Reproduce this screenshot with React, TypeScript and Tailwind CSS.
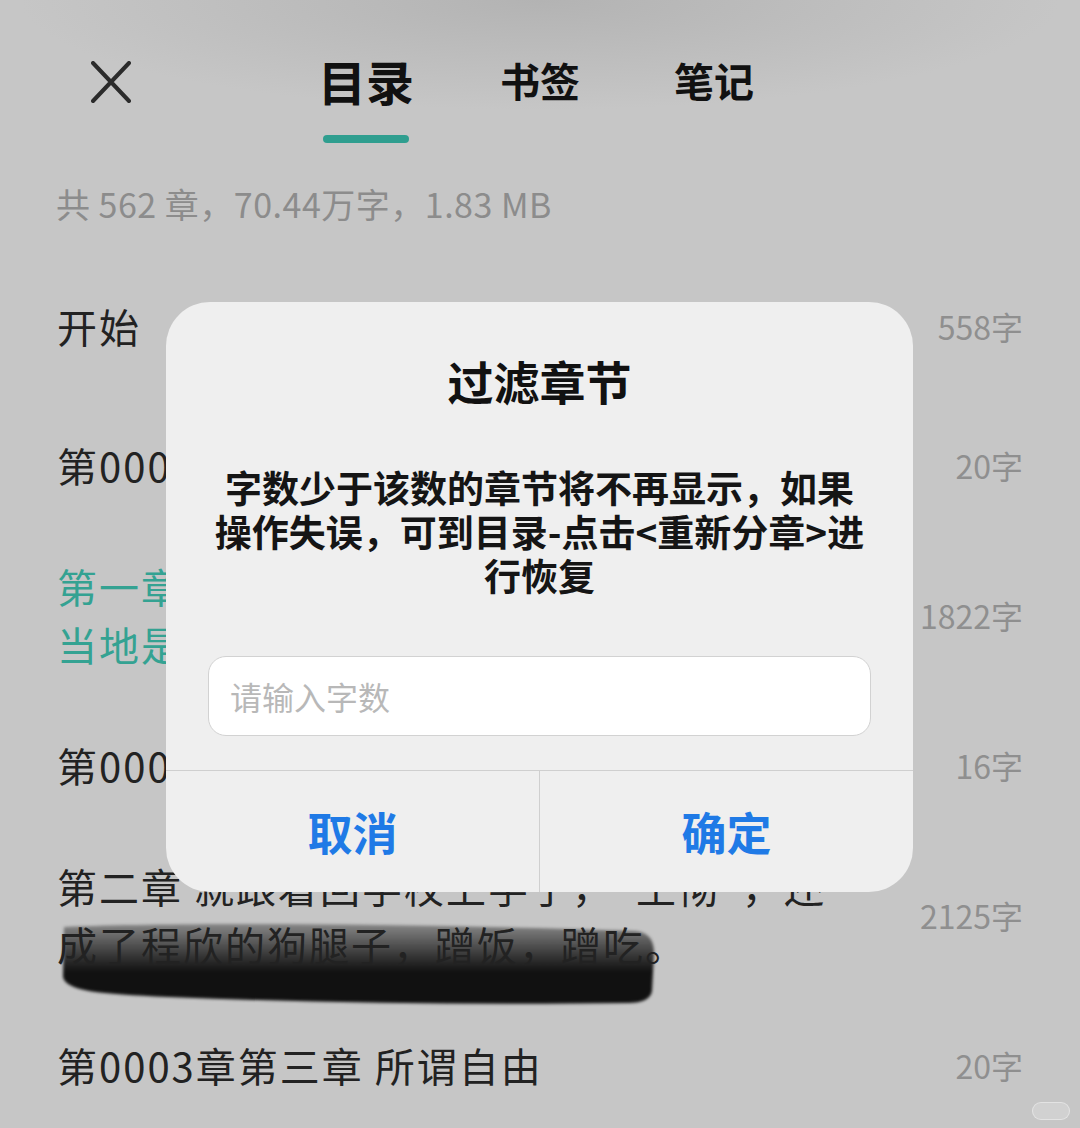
import React from 'react';

type Row = {
  id: number;
  lines: string[];
  count: string;
  active?: boolean;
  redacted?: boolean;
};

const rows: Row[] = [
  { id: 1, lines: ['开始'], count: '558字' },
  { id: 2, lines: ['第0001章 序章'], count: '20字' },
  { id: 3, lines: ['第一章 重生回到那一年的夏天', '当地是一个小县城'], count: '1822字', active: true },
  { id: 4, lines: ['第0002章 楔子'], count: '16字' },
  { id: 5, lines: ['第二章 就跟着回学校上学了，“王彻”，还', '成了程欣的狗腿子，蹭饭，蹭吃。'], count: '2125字', redacted: true },
  { id: 6, lines: ['第0003章第三章 所谓自由'], count: '20字' },
];

function CloseIcon() {
  return (
    <svg width="40" height="42" viewBox="0 0 40 42" fill="none">
      <path d="M2 2 L38 40 M38 2 L2 40" stroke="#2b2b2b" strokeWidth="4" strokeLinecap="round" />
    </svg>
  );
}

// marker stroke drawn under the second line of a chapter title
function Scribble() {
  return (
    <svg
      className="pointer-events-none absolute left-[58px] top-[64px] blur-[1.5px]"
      width="600"
      height="86"
      viewBox="0 0 600 86"
    >
      <defs>
        <linearGradient id="ink" x1="0" y1="0" x2="0" y2="1">
          <stop offset="0" stopColor="#111" stopOpacity="0.35" />
          <stop offset="0.4" stopColor="#111" stopOpacity="0.8" />
          <stop offset="0.6" stopColor="#111" stopOpacity="1" />
        </linearGradient>
      </defs>
      <path
        d="M6 6 C 150 0, 400 4, 578 10 Q 596 12 596 32 L 594 70 Q 592 82 570 82 C 420 84, 260 82, 110 76 C 40 73, 8 70, 5 56 Z"
        fill="url(#ink)"
      />
    </svg>
  );
}

export default function App() {
  return (
    <div className="relative h-[1128px] w-[1080px] overflow-hidden bg-[#c6c6c6] bg-[radial-gradient(ellipse_520px_110px_at_50%_0%,#b3b3b3,#c6c6c6)] font-['Noto_Sans_CJK_SC','Noto_Sans',sans-serif]">
      {/* Header with tabs */}
      <div className="flex items-start pl-[91px] pt-[48px]">
        <div className="mt-[2px] flex h-[64px] items-center">
          <CloseIcon />
        </div>
        <div className="ml-[148px] flex">
          <div className="flex w-[174px] flex-col items-center">
            <span className="text-[48px] font-semibold leading-[64px] text-[#111]">目录</span>
            <div className="mt-[23px] h-[8px] w-[86px] rounded-full bg-[#2f9e8f]" />
          </div>
          <div className="flex w-[174px] justify-center">
            <span className="text-[40px] font-semibold leading-[64px] text-[#111]">书签</span>
          </div>
          <div className="flex w-[174px] justify-center">
            <span className="text-[40px] font-semibold leading-[64px] text-[#111]">笔记</span>
          </div>
        </div>
      </div>

      <p className="mt-[41px] px-[56px] text-[34px] leading-[40px] tracking-[0.5px] text-[#8c8c8c]">
        共 562 章，70.44万字，1.83 MB
      </p>

      {/* Chapter list */}
      <div className="mt-[73px] flex flex-col gap-[63px]">
        {rows.map((row, i) => (
          <div
            key={row.id}
            className={`relative flex items-center justify-between px-[57px] ${i === 0 ? 'mb-[18px]' : ''}`}
          >
            {row.redacted && <Scribble />}
            <div
              className={`relative whitespace-nowrap text-[40px] leading-[58px] tracking-[2px] ${row.active ? 'text-[#34a292]' : 'text-[#222]'}`}
            >
              {row.lines.map((line) => (
                <div key={line}>{line}</div>
              ))}
            </div>
            <span className="text-[32px] leading-[40px] text-[#8f8f8f]">{row.count}</span>
          </div>
        ))}
      </div>

      {/* Filter dialog */}
      <div className="absolute left-[166px] top-[302px] flex h-[590px] w-[747px] flex-col overflow-hidden rounded-[44px] bg-[#efefef]">
        <h2 className="pt-[50px] text-center text-[46px] font-bold leading-[56px] text-[#111]">过滤章节</h2>
        <p className="mt-[57px] text-center text-[37px] font-semibold leading-[44px] text-[#151515]">
          <span className="block whitespace-nowrap">字数少于该数的章节将不再显示，如果</span>
          <span className="block whitespace-nowrap">操作失误，可到目录-点击&lt;重新分章&gt;进</span>
          <span className="block whitespace-nowrap">行恢复</span>
        </p>
        <div className="mx-[42px] mt-[59px] flex h-[80px] items-center rounded-[18px] border border-[#d2d2d2] bg-white px-[21px]">
          <span className="text-[32px] text-[#b8b8b8]">请输入字数</span>
        </div>
        <div className="mt-[34px] flex flex-1 border-t border-[#cfcfcf]">
          <button className="flex flex-1 items-center justify-center text-[45px] font-bold text-[#1f7ae6]">取消</button>
          <div className="w-px bg-[#cfcfcf]" />
          <button className="flex flex-1 items-center justify-center text-[45px] font-bold text-[#1f7ae6]">确定</button>
        </div>
      </div>

      <div className="absolute bottom-[8px] right-[10px] h-[18px] w-[38px] rounded-full border border-white/40 bg-white/20" />
    </div>
  );
}
